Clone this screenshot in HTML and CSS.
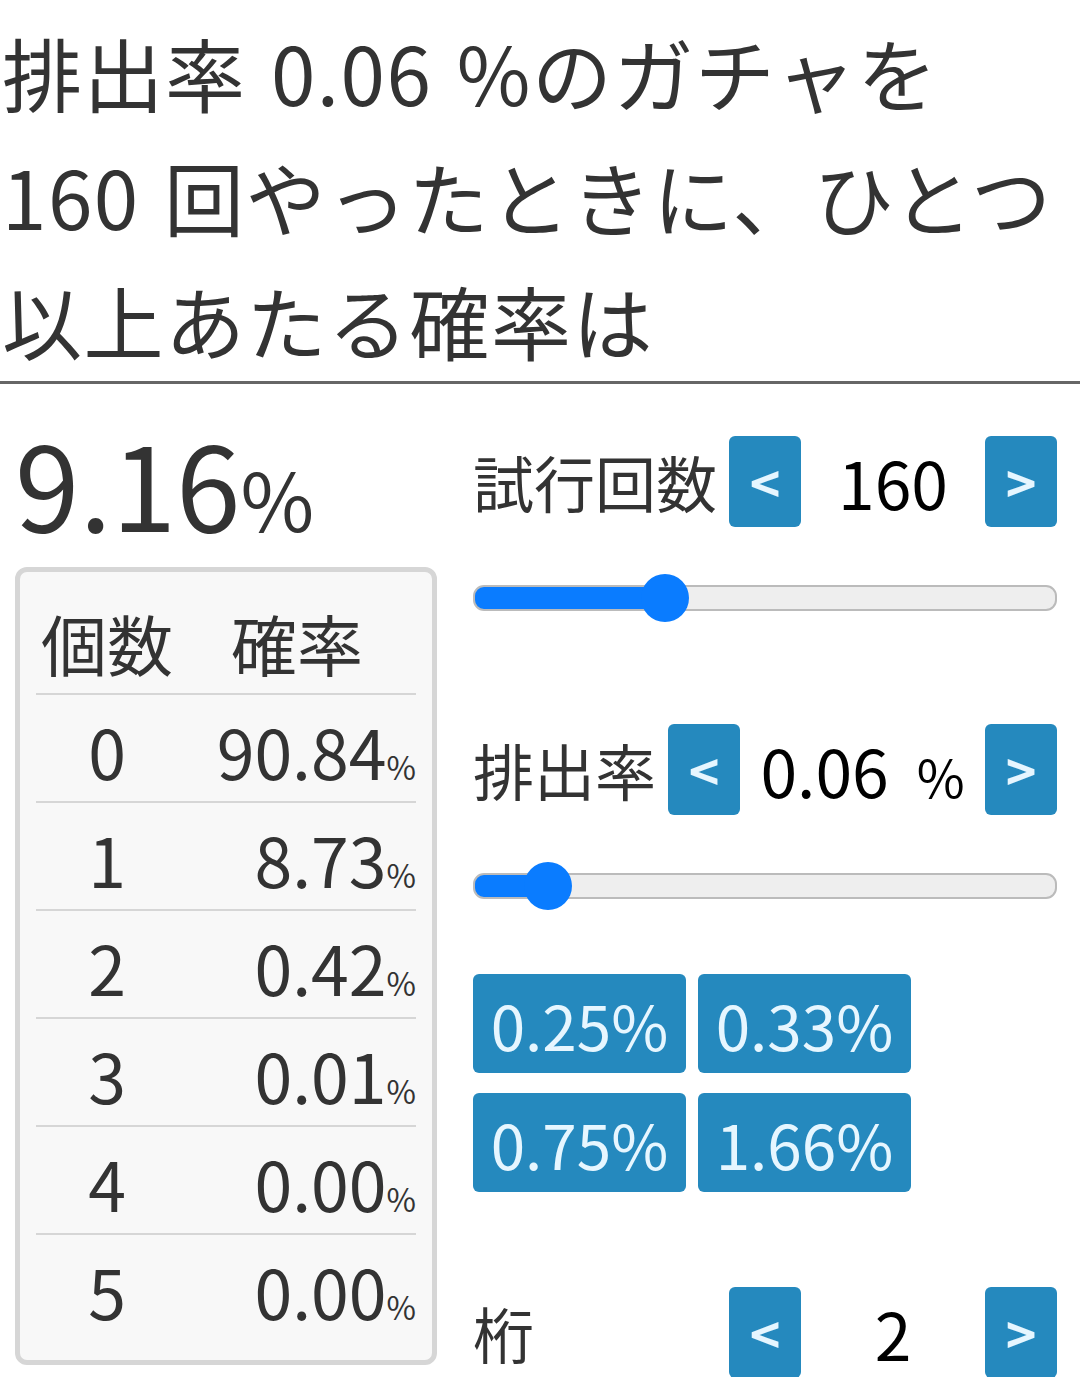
FILE: index.html
```html
<!DOCTYPE html>
<html lang="ja">
<head>
    <meta charset="UTF-8">
    <meta name="viewport" content="width=device-width, initial-scale=1.0">
    <title>ガチャ確率計算</title>
    <link rel="stylesheet" href="styles.css">
</head>
<body>
    <h1 class="question">排出率 0.06 %のガチャを 160 回やったときに、ひとつ以上あたる確率は</h1>
    <hr class="rule">
    <div class="main">
        <div class="result-col">
            <div class="total">9.16<span class="unit">%</span></div>
            <div class="dist">
                <table>
                    <thead>
                        <tr><th class="col-count">個数</th><th>確率</th></tr>
                    </thead>
                    <tbody>
                        <tr><td class="col-count">0</td><td class="prob">90.84<span class="pct">%</span></td></tr>
                        <tr><td class="col-count">1</td><td class="prob">8.73<span class="pct">%</span></td></tr>
                        <tr><td class="col-count">2</td><td class="prob">0.42<span class="pct">%</span></td></tr>
                        <tr><td class="col-count">3</td><td class="prob">0.01<span class="pct">%</span></td></tr>
                        <tr><td class="col-count">4</td><td class="prob">0.00<span class="pct">%</span></td></tr>
                        <tr><td class="col-count">5</td><td class="prob">0.00<span class="pct">%</span></td></tr>
                    </tbody>
                </table>
            </div>
        </div>

        <div class="controls">
            <div class="stepper">
                <span class="label">試行回数</span>
                <button class="step">&lt;</button>
                <span class="value">160</span>
                <button class="step">&gt;</button>
            </div>
            <input type="range" class="slider" min="1" max="510" value="160" style="--fill: 33%">

            <div class="stepper rate">
                <span class="label">排出率</span>
                <button class="step">&lt;</button>
                <span class="value">0.06<span class="value-unit">%</span></span>
                <button class="step">&gt;</button>
            </div>
            <input type="range" class="slider" min="0.01" max="0.55" step="0.01" value="0.06" style="--fill: 12.6%">

            <div class="presets">
                <button class="preset">0.25%</button>
                <button class="preset">0.33%</button>
                <button class="preset">0.75%</button>
                <button class="preset">1.66%</button>
            </div>

            <div class="stepper digits">
                <span class="label">桁</span>
                <button class="step">&lt;</button>
                <span class="value">2</span>
                <button class="step">&gt;</button>
            </div>
        </div>
    </div>
</body>
</html>
```

FILE: styles.css
```css
body {
    font-family: "Noto Sans CJK JP", "Noto Sans", sans-serif;
    color: #333;
    margin: 0;
    background: #fff;
}
.question {
    font-size: 80px;
    font-weight: normal;
    line-height: 124px;
    letter-spacing: 1.5px;
    word-spacing: 5px;
    margin: 0;
    padding: 9px 0 0 2px;
}
.rule {
    border: none;
    border-top: 3px solid #666;
    margin: 0;
}
.main {
    display: flex;
    gap: 36px;
    padding: 0 26px 0 15px;
}
.result-col {
    width: 422px;
    flex-shrink: 0;
}
.total {
    font-size: 116px;
    line-height: 1;
    margin-top: 39px;
}
.total .unit {
    font-size: 80px;
}
.dist {
    margin-top: 28px;
    border: 5px solid #d6d6d6;
    border-radius: 12px;
    background-color: #f8f8f8;
    padding: 0 16px 19px;
}
table {
    width: 100%;
    border-collapse: collapse;
}
th {
    font-size: 66px;
    font-weight: normal;
    height: 103px;
    padding: 18px 0 0;
    border-bottom: 2px solid #d6d6d6;
}
td {
    font-size: 68px;
    height: 102px;
    padding: 4px 0 0;
    border-bottom: 2px solid #d6d6d6;
}
tbody tr:last-child td {
    border-bottom: none;
}
.col-count {
    width: 142px;
    text-align: center;
}
.prob {
    text-align: right;
}
.pct {
    font-size: 32px;
}
.controls {
    flex: 1;
    padding-top: 49px;
}
.stepper {
    display: flex;
    align-items: center;
    gap: 12px;
}
.stepper .label {
    font-size: 61px;
}
.digits .label {
    min-width: 244px;
}
.stepper .value {
    flex: 1;
    text-align: center;
    font-size: 66px;
    color: #000;
}
.value-unit {
    font-size: 52px;
    margin-left: 28px;
}
button {
    font-family: inherit;
    border: none;
    background-color: #2589be;
    color: #e6f6ff;
    border-radius: 6px;
    cursor: pointer;
    padding: 0;
}
.step {
    width: 72px;
    height: 91px;
    font-size: 52px;
    font-weight: bold;
    flex-shrink: 0;
}
.slider {
    -webkit-appearance: none;
    appearance: none;
    display: block;
    width: 580px;
    height: 22px;
    margin: 56px 0 0;
    border: 2px solid #bbb;
    border-radius: 11px;
    background: linear-gradient(to right, #0a7cff var(--fill), #eee var(--fill));
}
.slider::-webkit-slider-thumb {
    -webkit-appearance: none;
    width: 48px;
    height: 48px;
    border-radius: 50%;
    background-color: #0a7cff;
    border: none;
}
.rate {
    margin-top: 110px;
}
.presets {
    display: grid;
    grid-template-columns: 213px 213px;
    gap: 20px 12px;
    margin-top: 75px;
}
.preset {
    height: 99px;
    font-size: 62px;
}
.digits {
    margin-top: 92px;
}
```
